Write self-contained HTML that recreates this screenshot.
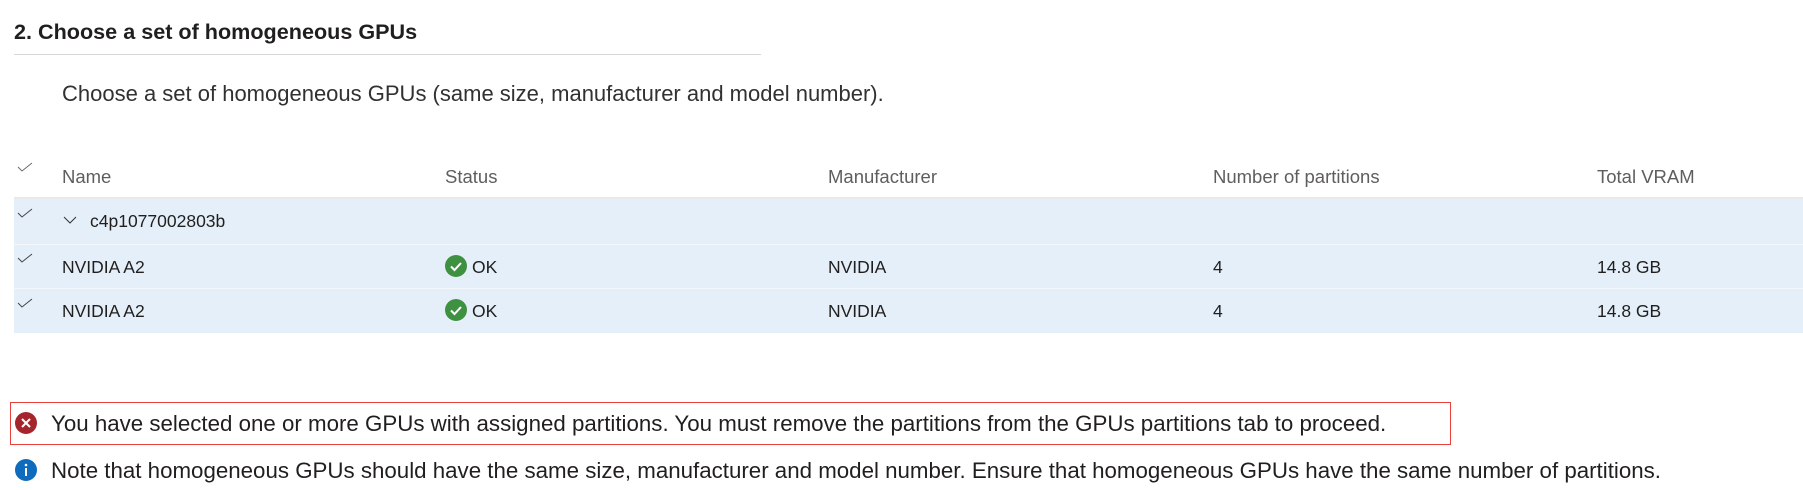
<!DOCTYPE html>
<html><head><meta charset="utf-8"><style>
body{margin:0;width:1803px;height:490px;background:#fff;font-family:"Liberation Sans",sans-serif;color:#323130;position:relative;overflow:hidden}
.a{position:absolute;white-space:nowrap}
.title{left:14px;top:19px;font-size:21.6px;font-weight:bold;color:#201f1e}
.hr{left:14px;top:54px;width:747px;height:1px;background:#d6d6d6}
.desc{left:62px;top:81px;font-size:22px}
.h{top:166px;font-size:18.5px;color:#605e5c}
.blue{left:14px;top:198px;width:1789px;height:135px;background:#e5eff9}
.sep{left:14px;height:1px;width:1789px;background:#f3f7fb}
.c{font-size:17.5px;color:#201f1e}
.ck{left:17px;width:16px;height:10px}
.err{left:10px;top:402px;width:1439px;height:41px;border:1.5px solid #e8403a}
.msg{font-size:22.3px;color:#201f1e}
</style></head><body>
<div class="a title">2. Choose a set of homogeneous GPUs</div>
<div class="a hr"></div>
<div class="a desc">Choose a set of homogeneous GPUs (same size, manufacturer and model number).</div>
<div class="a blue"></div>
<div class="a" style="left:14px;top:197px;width:1789px;height:2px;background:#e9e9e9"></div>
<div class="a sep" style="top:244px"></div>
<div class="a sep" style="top:288px"></div>
<svg class="a ck" style="top:162px" viewBox="0 0 16 10"><path d="M1 5 L5 9 L15 1" fill="none" stroke="#6b6b6b" stroke-width="1"/></svg>
<svg class="a ck" style="top:208px" viewBox="0 0 16 10"><path d="M1 5 L5 9 L15 1" fill="none" stroke="#444" stroke-width="1"/></svg>
<svg class="a ck" style="top:253px" viewBox="0 0 16 10"><path d="M1 5 L5 9 L15 1" fill="none" stroke="#444" stroke-width="1"/></svg>
<svg class="a ck" style="top:298px" viewBox="0 0 16 10"><path d="M1 5 L5 9 L15 1" fill="none" stroke="#444" stroke-width="1"/></svg>
<div class="a h" style="left:62px">Name</div>
<div class="a h" style="left:445px">Status</div>
<div class="a h" style="left:828px">Manufacturer</div>
<div class="a h" style="left:1213px">Number of partitions</div>
<div class="a h" style="left:1597px">Total VRAM</div>
<svg class="a" style="left:63px;top:216px" width="14" height="8" viewBox="0 0 14 8"><path d="M1 1 L7 7 L13 1" fill="none" stroke="#333" stroke-width="1"/></svg>
<div class="a c" style="left:90px;top:211px">c4p1077002803b</div>
<div class="a c" style="left:62px;top:257px">NVIDIA A2</div>
<div class="a c" style="left:62px;top:301px">NVIDIA A2</div>
<svg class="a" style="left:445px;top:255px" width="22" height="22" viewBox="0 0 22 22"><circle cx="11" cy="11" r="11" fill="#3f9142"/><path d="M6 11.5 L9.5 15 L16 8" fill="none" stroke="#fff" stroke-width="2"/></svg>
<svg class="a" style="left:445px;top:299px" width="22" height="22" viewBox="0 0 22 22"><circle cx="11" cy="11" r="11" fill="#3f9142"/><path d="M6 11.5 L9.5 15 L16 8" fill="none" stroke="#fff" stroke-width="2"/></svg>
<div class="a c" style="left:472px;top:257px">OK</div>
<div class="a c" style="left:472px;top:301px">OK</div>
<div class="a c" style="left:828px;top:257px">NVIDIA</div>
<div class="a c" style="left:828px;top:301px">NVIDIA</div>
<div class="a c" style="left:1213px;top:257px">4</div>
<div class="a c" style="left:1213px;top:301px">4</div>
<div class="a c" style="left:1597px;top:257px">14.8 GB</div>
<div class="a c" style="left:1597px;top:301px">14.8 GB</div>
<div class="a err"></div>
<svg class="a" style="left:15px;top:412px" width="22" height="22" viewBox="0 0 22 22"><circle cx="11" cy="11" r="11" fill="#a4262c"/><path d="M7 7 L15 15 M15 7 L7 15" stroke="#fff" stroke-width="2"/></svg>
<div class="a msg" style="left:51px;top:411px">You have selected one or more GPUs with assigned partitions. You must remove the partitions from the GPUs partitions tab to proceed.</div>
<svg class="a" style="left:15px;top:459px" width="22" height="22" viewBox="0 0 22 22"><circle cx="11" cy="11" r="11" fill="#0f6cbd"/><rect x="10" y="9" width="2" height="8" fill="#fff"/><circle cx="11" cy="6" r="1.3" fill="#fff"/></svg>
<div class="a msg" style="left:51px;top:458px">Note that homogeneous GPUs should have the same size, manufacturer and model number. Ensure that homogeneous GPUs have the same number of partitions.</div>
</body></html>
